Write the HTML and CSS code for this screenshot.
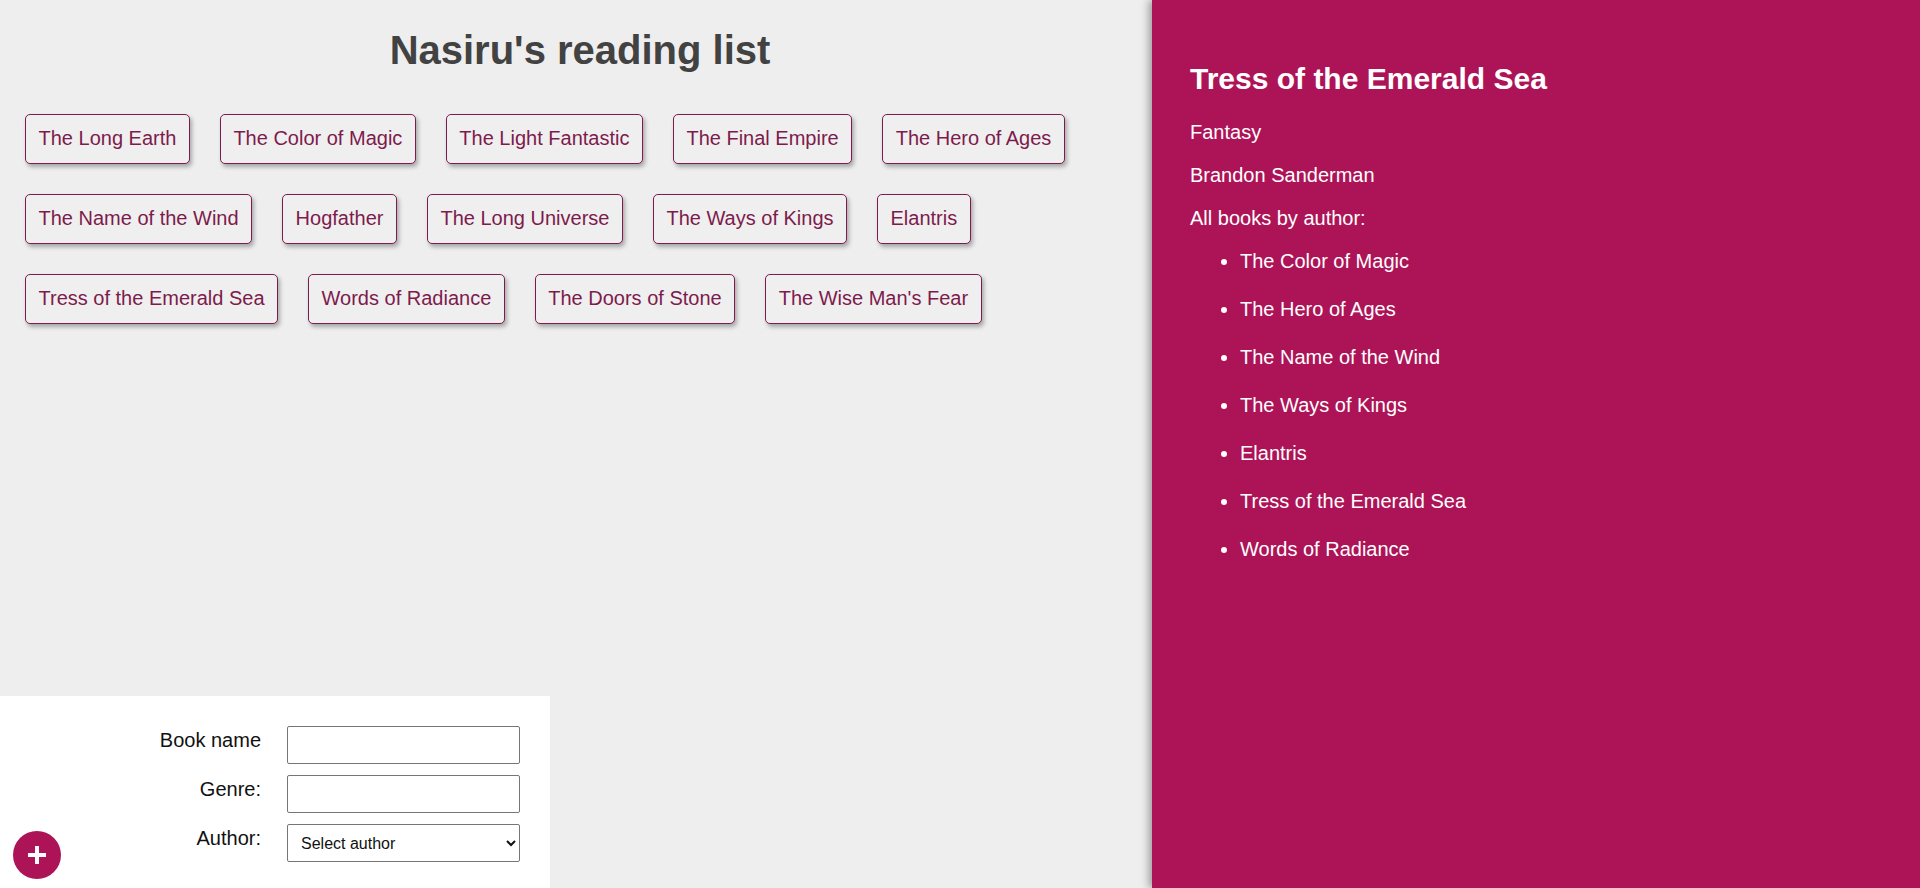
FILE: index.html
```html
<!DOCTYPE html>
<html lang="en">
<head>
<meta charset="utf-8">
<title>Nasiru's reading list</title>
<link rel="stylesheet" href="styles.css">
</head>
<body>
<div class="app">
  <main class="main">
    <h1 class="page-title">Nasiru's reading list</h1>
    <div class="books">
      <button class="book">The Long Earth</button>
      <button class="book">The Color of Magic</button>
      <button class="book">The Light Fantastic</button>
      <button class="book">The Final Empire</button>
      <button class="book">The Hero of Ages</button>
      <button class="book">The Name of the Wind</button>
      <button class="book">Hogfather</button>
      <button class="book">The Long Universe</button>
      <button class="book">The Ways of Kings</button>
      <button class="book">Elantris</button>
      <button class="book">Tress of the Emerald Sea</button>
      <button class="book">Words of Radiance</button>
      <button class="book">The Doors of Stone</button>
      <button class="book">The Wise Man's Fear</button>
    </div>
    <form class="add-form">
      <label class="field-label" for="bname">Book name</label>
      <input class="field-input" id="bname" type="text">
      <label class="field-label" for="genre">Genre:</label>
      <input class="field-input" id="genre" type="text">
      <label class="field-label" for="author">Author:</label>
      <select class="field-input field-select" id="author">
        <option>Select author</option>
      </select>
    </form>
    <button class="fab" aria-label="Add book">
      <svg width="22" height="22" viewBox="0 0 22 22"><path d="M11 2v18M2 11h18" stroke="#fff" stroke-width="4" fill="none"/></svg>
    </button>
  </main>
  <aside class="details">
    <h2 class="details-title">Tress of the Emerald Sea</h2>
    <p class="details-line">Fantasy</p>
    <p class="details-line">Brandon Sanderman</p>
    <p class="details-line">All books by author:</p>
    <ul class="author-books">
      <li>The Color of Magic</li>
      <li>The Hero of Ages</li>
      <li>The Name of the Wind</li>
      <li>The Ways of Kings</li>
      <li>Elantris</li>
      <li>Tress of the Emerald Sea</li>
      <li>Words of Radiance</li>
    </ul>
  </aside>
</div>
</body>
</html>
```

FILE: styles.css
```css
html, body {
  margin: 0;
  padding: 0;
  height: 100%;
}

body {
  font-family: "Liberation Sans", Arial, sans-serif;
  font-size: 20px;
  overflow: hidden;
}

.app {
  display: flex;
  height: 100vh;
}

.main {
  position: relative;
  width: 60%;
  background: #eeeeee;
  display: flex;
  flex-direction: column;
}

.page-title {
  margin: 27px 0 41px;
  padding-left: 8px;
  font-size: 40px;
  line-height: 46px;
  font-weight: bold;
  text-align: center;
  color: #424242;
}

.books {
  display: flex;
  flex-wrap: wrap;
  gap: 30px 30px;
  padding: 0 25px;
}

.book {
  font-family: "Liberation Sans", Arial, sans-serif;
  font-size: 20px;
  line-height: 23px;
  color: #7d1b4c;
  background: #f0eff0;
  border: 1px solid #7d1b4c;
  border-radius: 5px;
  padding: 12px 12.5px 13px;
  box-shadow: 2px 3px 4px rgba(0, 0, 0, 0.3);
  cursor: pointer;
}

.add-form {
  margin-top: auto;
  width: 550px;
  box-sizing: border-box;
  background: #ffffff;
  padding: 30px 30px 26px 0;
  display: grid;
  grid-template-columns: 1fr 233px;
  column-gap: 26px;
  row-gap: 11px;
}

.field-label {
  text-align: right;
  font-size: 20px;
  line-height: 23px;
  padding-top: 3px;
  color: #111111;
}

.field-input {
  box-sizing: border-box;
  height: 38px;
  width: 233px;
  margin: 0;
  border: 1px solid #767676;
  border-radius: 2px;
  background: #ffffff;
  font-family: "Liberation Sans", Arial, sans-serif;
  font-size: 16px;
}

.field-select {
  padding: 0 4px 0 9px;
  color: #111111;
}

.fab {
  position: absolute;
  left: 13px;
  bottom: 9px;
  width: 48px;
  height: 48px;
  border: none;
  border-radius: 50%;
  background: #ad1457;
  padding: 0;
  display: flex;
  align-items: center;
  justify-content: center;
  cursor: pointer;
}

.details {
  width: 40%;
  box-sizing: border-box;
  background: #ad1457;
  color: #ffffff;
  padding: 62px 38px;
  box-shadow: -3px 0 8px rgba(0, 0, 0, 0.35);
  z-index: 1;
}

.details-title {
  margin: 0 0 25px;
  font-size: 30px;
  font-weight: bold;
}

.details-line {
  margin: 0 0 20px;
  font-size: 20px;
  line-height: 23px;
}

.author-books {
  margin: 0;
  padding-left: 50px;
}

.author-books li {
  font-size: 20px;
  line-height: 23px;
  margin-bottom: 25px;
}
```
